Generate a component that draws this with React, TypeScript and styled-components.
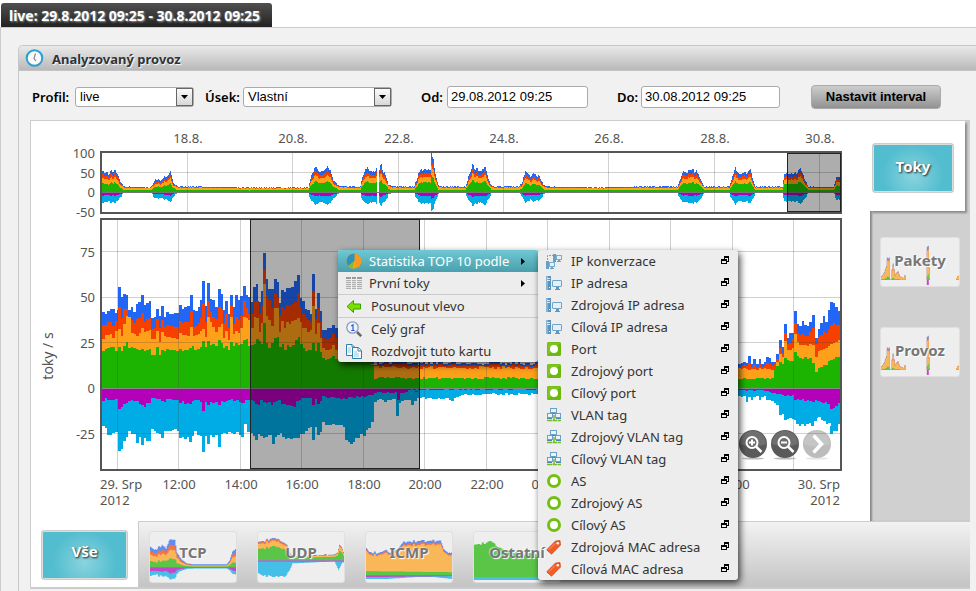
import React from "react";
import styled, { createGlobalStyle, css } from "styled-components";

const GlobalStyle = createGlobalStyle`
  * { box-sizing: border-box; }
  body { margin: 0; background: #fff; color: #222; font-family: "Noto Sans", sans-serif; font-size: 13px; overflow: hidden; }
  button, input, select { font: inherit; color: inherit; margin: 0; }
`;

const colors = {
  blue: "#2266f5", red: "#f54000", orange: "#ffa01a", green: "#1cb400",
  purple: "#b400b8", cyan: "#00ace6", frame: "#555",
};

/* ---------- layout ---------- */

const Page = styled.div`
  position: relative;
  display: flex;
  flex-direction: column;
  min-height: 100vh;
  padding-top: 3px;
  overflow: hidden;
`;

const PageTab = styled.h1`
  align-self: flex-start;
  margin: 0 0 0 1px;
  padding: 0 12px 0 8px;
  height: 24px;
  line-height: 26px;
  font-size: 14px;
  font-weight: 700;
  color: #fff;
  white-space: nowrap;
  text-shadow: 1px 1px 2px #999;
  background: linear-gradient(#505050, #222);
  border-radius: 3px 3px 0 0;
`;

const PageBody = styled.main`
  flex: 1;
  display: flex;
  padding: 17px 0 0 17px;
  background: #f1f1f1;
  border: solid #ccc;
  border-width: 1px 0 0 1px;
`;

const Panel = styled.section`
  flex: 1;
  min-width: 0;
  border: solid #c8c8c8;
  border-width: 1px 0 0 1px;
  border-radius: 5px 0 0 0;
`;

const PanelHeader = styled.header`
  display: flex;
  align-items: center;
  gap: 8px;
  height: 25px;
  padding-left: 6px;
  background: linear-gradient(#e9e9e9, #b9b9b9);
  border-bottom: 1px solid #c4c4c4;
  border-radius: 4px 0 0 0;
`;

const PanelTitle = styled.h2`
  margin: 0;
  padding-top: 2px;
  font-size: 13px;
  line-height: 20px;
  font-weight: 700;
  color: #333;
  text-shadow: 1px 1px 1px #fff;
`;

const Controls = styled.form`
  display: flex;
  align-items: center;
  height: 49px;
  padding: 2px 0 0 13px;
`;

const Label = styled.label<{ $width: number }>`
  width: ${(p) => p.$width}px;
  font-size: 13px;
  font-weight: 600;
  color: #000;
  white-space: nowrap;
`;

const SelectBox = styled.span<{ $width: number; $after: number }>`
  display: grid;
  width: ${(p) => p.$width}px;
  height: 20px;
  margin-right: ${(p) => p.$after}px;
  background: #fff;
  border: 1px solid #aaa;
  border-radius: 3px;
  > * { grid-area: 1 / 1; }
`;

const Select = styled.select`
  appearance: none;
  width: 100%;
  height: 18px;
  padding: 0 20px 0 4px;
  border: 0;
  background: transparent;
  color: #000;
  font: 13px "Liberation Sans", Arial, sans-serif;
`;

const Arrow = styled.span`
  justify-self: end;
  display: grid;
  place-items: center;
  width: 17px;
  height: 18px;
  background: linear-gradient(#fafafa, #d8d8d8);
  border: 1px solid #666;
  pointer-events: none;
`;

const DateInput = styled.input<{ $width: number; $after: number }>`
  width: ${(p) => p.$width}px;
  height: 22px;
  margin-right: ${(p) => p.$after}px;
  padding: 0 3px;
  background: #fff;
  border: 1px solid #aaa;
  border-radius: 3px;
  color: #000;
  font: 13px "Liberation Sans", Arial, sans-serif;
`;

const SubmitButton = styled.button`
  width: 130px;
  height: 24px;
  padding: 0;
  border: 1px solid #aaa;
  border-radius: 4px;
  background: linear-gradient(#cdcdcd, #929292);
  color: #000;
  font: bold 13px "Liberation Sans", Arial, sans-serif;
`;

const Board = styled.div`
  margin: 0 6px 0 11px;
  border: solid #ccc;
  border-width: 1px 0 2px 1px;
  background: #fff;
`;

const BoardMain = styled.div`
  display: flex;
`;

const ChartArea = styled.div`
  position: relative;
  flex: 1;
  min-width: 0;
`;

const ChartSvg = styled.svg`
  display: block;
  width: 100%;
  height: auto;
  font-family: "Noto Sans", sans-serif;
  font-size: 13px;
  fill: #545454;
`;

const ZoomButtons = styled.div`
  position: absolute;
  right: 38px;
  bottom: 60px;
  display: flex;
  gap: 2px;
`;

const RoundButton = styled.button`
  width: 30px;
  height: 32px;
  padding: 0;
  border: 0;
  background: none;
  &:disabled { opacity: 0.4; }
  svg { display: block; }
`;

const Side = styled.nav`
  display: flex;
  flex-direction: column;
  width: 100px;
  background: #d0d0d0;
`;

const SideActive = styled.div`
  position: relative;
  width: 95px;
  height: 90px;
  padding: 22px 0 0 2px;
  background: #fff;
  box-shadow: 2px 2px 2px #8a8a8a;
  clip-path: inset(0 -5px -5px 0);
`;

const SideRest = styled.div`
  flex: 1;
  display: flex;
  flex-direction: column;
  gap: 40px;
  padding: 26px 0 0 10px;
  box-shadow: inset 3px 0 2px -1px #888;
`;

const BottomTabs = styled.nav`
  display: flex;
  height: 66px;
`;

const BottomActive = styled.div`
  width: 107px;
  padding: 9px 0 0 10px;
`;

const BottomRest = styled.div`
  flex: 1;
  display: flex;
  gap: 20px;
  padding: 9px 0 0 10px;
  border: solid #ccc;
  border-width: 1px 0 0 1px;
  background: linear-gradient(#f2f2f2, #c4c4c4);
`;

const tabText = css`
  font-size: 15px;
  line-height: 20px;
  font-weight: 700;
`;

const ActiveTab = styled.button<{ $width: number; $lift: number }>`
  ${tabText}
  width: ${(p) => p.$width}px;
  height: 50px;
  padding: 0 0 ${(p) => p.$lift}px;
  border: 1px solid #ccc;
  border-radius: 3px;
  outline: 1px solid #ddd;
  outline-offset: -2px;
  background: radial-gradient(circle at 50% 65%, #8ad4de, #52bdcf 60%);
  color: #fff;
  text-shadow: 1px 1px 2px #222;
`;

const Thumb = styled.button<{ $width: number; $height: number }>`
  ${tabText}
  display: grid;
  flex: none;
  width: ${(p) => p.$width}px;
  height: ${(p) => p.$height}px;
  padding: 0;
  border: 1px solid #e0e0e0;
  border-radius: 3px;
  background: #eee;
  color: #777;
  overflow: hidden;
  text-shadow: 1px 1px 1px #fff, -1px -1px 1px rgba(255, 255, 255, 0.5);
  > * { grid-area: 1 / 1; }
  svg { display: block; width: 100%; height: 100%; opacity: 0.7; }
`;

const ThumbLabel = styled.span<{ $lift: number }>`
  align-self: center;
  justify-self: center;
  padding-bottom: ${(p) => p.$lift}px;
  z-index: 1;
`;

/* ---------- menus ---------- */

const Menu = styled.ul<{ $x: number; $y: number }>`
  position: absolute;
  left: ${(p) => p.$x}px;
  top: ${(p) => p.$y}px;
  width: 200px;
  margin: 0;
  padding: 0;
  list-style: none;
  background: #ededed;
  border-radius: 3px;
  box-shadow: 2px 3px 7px rgba(0, 0, 0, 0.75);
  overflow: hidden;
`;

const MenuRow = styled.li<{ $line?: boolean }>`
  border-top: ${(p) => (p.$line ? "1px solid #ccc" : "0")};
`;

const MenuButton = styled.button<{ $active?: boolean; $sub?: boolean }>`
  display: grid;
  grid-template-columns: 16px 1fr 10px;
  column-gap: ${(p) => (p.$sub ? 7 : 9)}px;
  align-items: center;
  width: 100%;
  height: 22px;
  padding: 0 8px;
  border: 0;
  background: ${(p) => (p.$active ? "linear-gradient(#6fc8d4, #4a9fac)" : "transparent")};
  color: ${(p) => (p.$active ? "#fff" : "#333")};
  font-size: 13px;
  line-height: 20px;
  text-align: left;
  white-space: nowrap;
  svg { display: block; }
`;

/* ---------- chart data ---------- */

type Pt = [number, number];

/* "x v v v | x v v": each run starts at x and steps by one five-minute bar. */
const BAR = 2.5625;
const runs = (text: string): Pt[] =>
  text.split("|").flatMap((run) => {
    const [x, ...v] = run.trim().split(/\s+/).map(Number);
    return v.map((h, i): Pt => [x + i * BAR, h]);
  });

const stepArea = (pts: Pt[], zero: number, dir: number, end: number) => {
  let d = `M${pts[0][0]} ${zero}`;
  pts.forEach(([x, h], i) => {
    const next = i + 1 < pts.length ? pts[i + 1][0] : end;
    d += `V${(zero - dir * h).toFixed(1)}H${next.toFixed(1)}`;
  });
  return d + `V${zero}Z`;
};

const noise = (i: number) => {
  const s = Math.sin(i * 127.1 + 11.7) * 43758.5453;
  return s - Math.floor(s);
};

const flat = (from: number, to: number, base: number, spread: number, seed: number) => {
  const out: number[] = [];
  for (let x = from, i = 0; x < to; x += BAR, i++) out.push(+(base + spread * noise(i + seed)).toFixed(1));
  return `${from} ${out.join(" ")}`;
};

const main = {
  blue: runs(
    "102 76 74 77 79 79 75 78|118 101 91 94 93|128 78 81 76 84 86|141 93 83 85 87|151 70 71 79 72 82 71|166 76 74 74 75 75|179 83 79 81 82|190 93 78 77 81 88|202 107 82|207 105 89 88 81|218 99 94 78|225 87 74|230 93 81|235 93 88 92|243 102 93 91|251 86|253 101 104 86 97|263 135 109 99 99|274 109 106 85|281 98 96 100 100 101 107|297 113 90 87 79 78 74|312 114 79 95 77|322 58 58 60 60 63 60 60 58 56 52 50 46 44 40 38 38 36 32 30 28|" +
      flat(374, 738, 23, 4, 3) +
      "|738 24 25 26 25 32 24 29 24 29 24 26 31 30 26 26 34|779 48 41|784 64 50 55 55 66|794 77 64 62 67 63 62 66 73|815 50 59 65 72 66 78|830 86 85 81 77"),
  red: runs(
    "102 63 63 66 66 62 67|118 81 70 79 79|128 66 68 65 69 70|141 75 66 69 70|151 59 60 69 60 68 61|166 63 62 62 61 61|179 67 65 66 66|190 77 61 62 65 70|202 84 66|207 87 76 71 69|218 81 79 65|225 74 60|230 82 64 71 68 72|243 87 80 74|251 74 86|256 87 74 83|263 118 93 88 80|274 94 91 73|281 81 79 83 82 84 86|297 95 80 74 71 68 66|312 97 69 80 66|322 50 48 49 50 54 50 49 48 46 44 42 40 38 36 34 32 30 28 26 25|" +
      flat(374, 738, 21, 4, 3) +
      "|738 21 22 23 22 25 21 23 21 24 21 22 25 24 22 24 29|779 40 35|784 55 44 45 49 58|794 65 55 53 54 52 52 56 60|815 44 51 53 57 55 59|830 63 65 63 63"),
  orange: runs(
    "102 49 53 53 54 50 57|118 59 52 64 72 71|131 55 54 52 55|141 60 56 57 58|151 49 49 57 46 56 52|166 51 51 50 50 49|179 55 53 53 52|190 61 52 53 54 57|202 59 51|207 71 66 61 56|218 61 64 50|225 57 48|230 71 54 57 55 60|243 71 70 68|251 60 71|256 70 56 65|263 104 72 68 62|274 80 80 56|281 67 60 66 64 67 68|297 70 66 60 60 56 58|312 82 54 65 50|322 40 38 38 39 43 38 38 36 35 34 33 32 31 30 29 28 27 26 25 24|" +
      flat(374, 738, 19, 3, 7) +
      "|738 20 19 20 19 18 19 19 18 20 19 20 19 19 18 19 26|779 34 31|784 47 38 38 40 52|794 54 46 43 43 43 42 44 43|815 31 37 38 39 40 42|830 44 45 46 48"),
  green: runs(
    "102 37 39 40 41 41 37|118 41 37 42 46|128 40 41 40 39 38|141 39 37 38 39|151 33 33 41 33 38 37|166 39 38 38 38 37|179 39 37 38 38 40 42 38 39 41|202 47 41|207 47 43 44 42|218 48 45 40|225 42 38|230 46 42 45 43 44|243 48 49 42|251 43 44 49 47 44|263 65 45 40 45|274 50 51 41 44 38 43 41 43|295 48 51 44 40 37 38|312 45 37 45 36|322 30 28 29 30 32 29 29 28 28 28 27 27 27 26 26 26 26 26 26 23|" +
      flat(374, 738, 9, 2, 5) +
      "|738 9 9 10 9 9 9 9 10 10 10 9 10 9 10 19 22|779 26 24 30 28 27 27|794 36 32 30 29 31 29 30 25|815 16 20 21 23 23 27|830 28 29 31 31"),
  cyan: runs(
    "102 38 40 47 47 45 44|118 63 61 53 49 43 46 46 55 49 57 50 53 53|151 41 43 45 46 50 43 43 43 42 41 43|179 50 49 51 49 54 48 43 47 48|202 64 48 56 47 49 47|218 59 46 45 46 44 45 46 44 47 49|244 36 44|250 45 48 52 46 48 50 49 47|272 56 49 47 45 49 51 50 51 50 50 50|300 46 46 43 40 39|312 52 39 47 44|322 34 37 37 37 36 37 37 37 39 52 54 56 54 50 50 46 48 42 40 34|" +
      "374 14 12 11 12 14 12 12 11|396 28 15 13 12 12 12 17 13|" + flat(417, 446, 9, 2, 1) + "|446 10 12 13 10 9 8 7|" + flat(464, 738, 5, 2, 9) +
      "|738 8 9 8 14 9 12 9 8 12 9 8 12 12 13 15 17|779 27 26 32 31 30 31 32|796 36 38 36 38 36 35 38 33 30|818 29 32 33 36 35 38|830 46 43 43 36"),
  purple: runs(
    "102 13 10 12 12 12 11|118 21 19 16 15 13 12 13 13 16 17 19 15 15|151 10 10 11 11 13 14 11 11 12 12 12|179 15 13 16 15 16 13 12 12 14|202 23 14 17 14 15 14|218 17 13 14 13 12 11 13 12 14 15|245 12 12 12 13 16 17 12 14 15 14 17 14 13 12 16 16 17 17 18 19 13 12 10 10|312 17 11 16 13 8 9 10 9 9 10 10 11 10 11 9 9 10 8 9 8 9 8 7 7|" +
      flat(374, 420, 3, 2, 4) + "|397 12 5 4 4|" + flat(408, 738, 1, 1, 2) +
      "|738 2 2 2 3 2 2 3 2 2 2 3 3 4 5 5 6|779 6 7 8 7 8 7|794 12 11 12 11 13 12 13 14 12 13 14 15 14 16|830 21 20 18 15"),
};

const hills: Pt[] = [
  [102, 20], [108, 19], [111, 22], [117, 19], [119, 12], [124, 6], [150, 5], [152, 8], [156, 13], [160, 11], [164, 17], [166, 14],
  [170, 20], [173, 9], [178, 6], [200, 6], [240, 5], [308, 5], [312, 20], [316, 25], [320, 20], [324, 22], [327, 27], [330, 21], [333, 11],
  [338, 7], [345, 6], [360, 6], [362, 15], [365, 22], [367, 26], [370, 20], [375, 22], [381, 26], [384, 18], [388, 8], [392, 6],
  [414, 6], [418, 18], [424, 24], [430, 21], [431, 37], [433, 33], [435, 20], [438, 7], [442, 6], [465, 6], [468, 15], [472, 26],
  [476, 22], [485, 24], [487, 16], [491, 7], [494, 6], [518, 6], [522, 10], [525, 22], [528, 18], [530, 16], [533, 19], [539, 16],
  [542, 9], [545, 6], [600, 5], [640, 6], [677, 6], [681, 17], [684, 22], [690, 20], [696, 22], [700, 13], [704, 6], [729, 6],
  [732, 15], [735, 23], [738, 20], [745, 18], [750, 22], [752, 14], [755, 6], [782, 6], [784, 18], [790, 17], [800, 22], [805, 12],
  [808, 6], [833, 5], [836, 14], [840, 15],
];

const at = (pts: Pt[], x: number) => {
  const i = pts.findIndex((p) => p[0] > x);
  if (i < 0) return pts[pts.length - 1][1];
  if (i === 0) return pts[0][1];
  const [x0, a] = pts[i - 1];
  const [x1, b] = pts[i];
  return a + ((b - a) * (x - x0)) / (x1 - x0);
};

const overview = (f: (h: number) => number): Pt[] => {
  const out: Pt[] = [];
  for (let x = 102; x < 840; x++) {
    const h = at(hills, x);
    const hh = x > 376 && x < 379 ? 0 : h > 8 ? h * (0.9 + 0.2 * noise(x >> 1)) : h - 0.7 + 0.5 * noise(x);
    out.push([x, f(hh)]);
  }
  return out;
};

const over = {
  blue: overview((h) => h),
  red: overview((h) => (h < 8 ? h * 0.88 : h * 0.83)),
  orange: overview((h) => (h < 8 ? h * 0.8 : h * 0.67)),
  green: overview((h) => (h < 8 ? h * 0.36 : h * 0.43)),
  cyan: overview((h) => (h < 8 ? h * 0.22 : h * 0.5)),
  purple: overview((h) => (h < 8 ? h * 0.1 : h * 0.17)),
};

type Layers = typeof main;
const Stack = ({ data, zero, end }: { data: Layers; zero: number; end: number }) => (
  <g shapeRendering="crispEdges">
    {(["blue", "red", "orange", "green"] as const).map((k) => (
      <path key={k} fill={colors[k]} d={stepArea(data[k], zero, 1, end)} />
    ))}
    {(["cyan", "purple"] as const).map((k) => (
      <path key={k} fill={colors[k]} d={stepArea(data[k], zero, -1, end)} />
    ))}
  </g>
);

const dayTicks: [number, string][] = [
  [187, "18.8."], [292, "20.8."], [398, "22.8."], [503, "24.8."], [608, "26.8."], [714, "28.8."], [819, "30.8."],
];
const hourTicks: [number, string][] = [
  [117, ""], [178, "12:00"], [240, "14:00"], [301, "16:00"], [363, "18:00"], [424, "20:00"], [486, "22:00"], [547, "00:00"],
  [609, "02:00"], [670, "04:00"], [732, "06:00"], [793, ""],
];

const TrafficChart = () => (
  <ChartSvg viewBox="31 121 839 400" role="img" aria-label="Analyzovaný provoz">
    {dayTicks.map(([x, t]) => <text key={t} x={x + 1} y={143} textAnchor="middle">{t}</text>)}
    {[["100", 158], ["50", 178], ["0", 197], ["-50", 217]].map(([t, y]) => (
      <text key={t} x={95} y={y} textAnchor="end">{t}</text>
    ))}
    <Stack data={over} zero={192} end={840} />
    <g fill="#444" fillOpacity={0.25}>
      {dayTicks.map(([x]) => <rect key={x} x={x} y={153} width={1} height={59} />)}
      <rect x={102} y={172} width={738} height={1} />
    </g>
    <rect x={102} y={192} width={738} height={1} fill="#777" />
    <rect x={101} y={152} width={740} height={61} fill="none" stroke={colors.frame} strokeWidth={2} />
    <rect x={787.5} y={153.5} width={53} height={58} fill="#000" fillOpacity={0.32} stroke="#222" />

    <Stack data={main} zero={388} end={840} />
    <g fill="#444" fillOpacity={0.25}>
      {hourTicks.map(([x]) => <rect key={x} x={x} y={220} width={1} height={249} />)}
      {[251, 297, 342, 433].map((y) => <rect key={y} x={102} y={y} width={738} height={1} />)}
    </g>
    <rect x={102} y={388} width={738} height={1} fill="#888" />
    <rect x={101} y={219} width={740} height={251} fill="none" stroke={colors.frame} strokeWidth={2} />
    <rect x={250.5} y={219.5} width={169} height={249} fill="#000" fillOpacity={0.32} stroke="#222" />
    {[["75", 257], ["50", 302], ["25", 348], ["0", 393], ["-25", 439]].map(([t, y]) => (
      <text key={t} x={95} y={y} textAnchor="end">{t}</text>
    ))}
    {hourTicks.map(([x, t]) => t && <text key={x} x={x + 1} y={489} textAnchor="middle">{t}</text>)}
    <text x={100} y={489}>29. Srp</text>
    <text x={100} y={505}>2012</text>
    <text x={840} y={489} textAnchor="end">30. Srp</text>
    <text x={840} y={505} textAnchor="end">2012</text>
    <text transform="translate(53 356) rotate(-90)" textAnchor="middle" fontSize={14}>toky / s</text>
  </ChartSvg>
);

/* ---------- thumbnails ---------- */

interface Mini { w: number; h: number; zero: number; up: [string, Pt[]][]; down: [string, Pt[]][] }

const scale = (pts: Pt[], k: number): Pt[] => pts.map(([x, y]) => [x, y * k]);

const tcp: Pt[] = [[0, 21], [4, 18], [8, 20], [12, 23], [16, 18], [19, 27], [22, 28], [25, 28], [27, 14], [32, 8], [37, 4], [45, 3], [78, 3], [81, 7], [84, 16], [88, 21]];
const udp: Pt[] = [[0, 19], [6, 20], [12, 22], [18, 22], [24, 19], [29, 15], [33, 6], [38, 4], [56, 5], [78, 6], [81, 8], [83, 16], [86, 13], [88, 6]];
const icmp: Pt[] = [[0, 26], [3, 22], [16, 21], [19, 24], [24, 21], [32, 25], [38, 32], [76, 33], [79, 25], [84, 21], [88, 23]];
const rest: Pt[] = [[0, 33], [18, 36], [22, 32], [28, 28], [50, 24], [88, 22]];
const pak: Pt[] = [
  [0, 4], [3, 8], [5, 14], [6, 24], [8, 22], [9, 1], [10, 1], [11, 12], [12, 17], [14, 5], [17, 8], [19, 4], [23, 2], [24, 5], [25, 0],
  [46, 0], [47, 35], [48, 34], [49, 12], [50, 0], [76, 0], [78, 4], [80, 5],
];

const minis: Record<string, Mini> = {
  TCP: { w: 88, h: 51, zero: 36, up: [["blue", tcp], ["red", scale(tcp, 0.8)], ["orange", scale(tcp, 0.62)], ["green", scale(tcp, 0.3)]], down: [["cyan", scale(tcp, 0.42)], ["purple", scale(tcp, 0.2)]] },
  UDP: { w: 88, h: 51, zero: 29, up: [["blue", udp], ["red", scale(udp, 0.96)], ["orange", scale(udp, 0.88)], ["green", scale(udp, 0.62)]], down: [["cyan", [[0, 13], [5, 16], [27, 16], [32, 10], [35, 3], [78, 1], [82, 10], [86, 2]]], ["purple", [[0, 1]]]] },
  ICMP: { w: 88, h: 51, zero: 44, up: [["blue", scale(icmp, 1.07)], ["red", icmp], ["orange", scale(icmp, 0.95)], ["green", [[0, 4], [88, 3]]]], down: [["cyan", [[0, 4], [20, 4], [50, 2], [70, 2], [88, 4]]], ["purple", [[0, 2], [88, 1]]]] },
  "Ostatní": { w: 88, h: 51, zero: 46, up: [["green", rest]], down: [["cyan", [[0, 3], [88, 3]]]] },
  Pakety: { w: 80, h: 49, zero: 43, up: [["blue", pak], ["red", scale(pak, 0.93)], ["orange", scale(pak, 0.88)], ["green", scale(pak, 0.15)]], down: [["purple", [[0, 0], [46, 0], [47, 5], [48, 5], [49, 0]]]] },
};

const MiniChart = ({ m }: { m: Mini }) => {
  const line = (pts: Pt[]): Pt[] =>
    Array.from({ length: m.w }, (_, x): Pt => {
      const h = at(pts, x);
      return [x, h > 5 ? h + Math.round(noise(x >> 1) * 2) - 1 : h];
    });
  return (
    <svg viewBox={`0 0 ${m.w} ${m.h}`} preserveAspectRatio="none" aria-hidden="true">
      {m.up.map(([k, p]) => <path key={k} fill={colors[k as keyof typeof colors]} d={stepArea(line(p), m.zero, 1, m.w)} />)}
      {m.down.map(([k, p]) => <path key={k} fill={colors[k as keyof typeof colors]} d={stepArea(line(p), m.zero, -1, m.w)} />)}
    </svg>
  );
};

/* ---------- icons ---------- */

const Icon = ({ children, size = 16 }: { children: React.ReactNode; size?: number }) => (
  <svg width={size} height={size} viewBox={`0 0 ${size} ${size}`} aria-hidden="true">{children}</svg>
);

const PieIcon = () => (
  <Icon>
    <circle cx="8" cy="8" r="7.5" fill="#f59a1c" />
    <path d="M.5 8A7.500 7.500 0 0 0 8 15.500L9 8Z" fill="#f2c022" />
    <path d="M8.500 8V.5A7.500 7.500 0 0 0 2.500 13Z" fill="#2f93b8" />
    <path d="M8.500 8 2.500 13A7.500 7.500 0 0 0 7 15.400Z" fill="#8fb52c" />
  </Icon>
);
const TableIcon = () => (
  <Icon>
    <path d="M0 2h16v2H0z" fill="#999" />
    <path d="M0 5h16v9H0z" fill="#e2e2e2" />
    <path d="M0 5.500h16M0 7.500h16M0 9.500h16M0 11.500h16M0 13.500h16" stroke="#b0b0b0" />
    <path d="M5.500 2v12M10.500 2v12" stroke="#f3f3f3" />
  </Icon>
);
const LeftIcon = () => (
  <Icon><path d="M1 8.500 7.500 2.500V6H14.500V11H7.500V14.500Z" fill="#7be000" stroke="#35a000" strokeLinejoin="round" /></Icon>
);
const MagnifierIcon = () => (
  <Icon>
    <path d="m11 11 4.200 4.200" stroke="#666" strokeWidth="2.500" />
    <circle cx="6.500" cy="6.500" r="5.700" fill="#eef4ff" stroke="#8a9bc8" strokeWidth="1.300" />
    <path d="M5.200 5 7 3.800V9.500M5.200 9.500H8.600" stroke="#2d57c8" strokeWidth="1.200" fill="none" />
  </Icon>
);
const CopyIcon = () => (
  <Icon>
    <g fill="#f7fbff" stroke="#2b83ad">
      <path d="M.5 1.500H6L8.500 4V12.500H.5Z" /><path d="M6 1.500V4H8.500" />
      <path d="M6.500 4.500H12.500L15.500 7.500V15.500H6.500Z" /><path d="M12 4.500V8H15.500" />
    </g>
    <path d="M2 5h3M2 7h3M2 9h3M8 9h3M8 11h5M8 13h5" stroke="#9cc9e0" />
  </Icon>
);
const HostIcon = () => (
  <Icon>
    <path d="M0 1h5v14H0z" fill="#5a93bd" /><path d="M0 1h2v14H0z" fill="#87b4d3" />
    <path d="M1 3.500h3M1 5.500h3" stroke="#dcebf5" /><path d="M3 12h1v1H3z" fill="#fff" />
    <rect x="6.500" y="5.500" width="9" height="6" rx=".5" fill="#e4f0f8" stroke="#6fa3c8" />
    <path d="M10 12h3v2h1v1H9v-1h1z" fill="#5f97bf" />
  </Icon>
);
const ConversationIcon = () => (
  <Icon>
    <path d="M1.500 7V2.500H8" fill="none" stroke="#6fa3c8" strokeDasharray="2 1" />
    <path d="M7 1h3v8H7zM0 8h3v8H0z" fill="#6a9fc5" />
    <rect x="10.500" y="2.500" width="5" height="4" fill="#e4f0f8" stroke="#7badcf" />
    <rect x="3.500" y="9.500" width="5" height="4" fill="#e4f0f8" stroke="#7badcf" />
    <path d="M12 7h2v1h1v1h-4V8h1zM5 14h2v1h1v1H4v-1h1z" fill="#6a9fc5" />
  </Icon>
);
const PortIcon = () => (
  <Icon>
    <rect x="1" y="1" width="14" height="14" rx="1.500" fill="#6db80c" />
    <path d="M1.500 1.500h13L1.500 14.500z" fill="#8ccc30" opacity=".6" />
    <circle cx="8" cy="8" r="4" fill="#fff" />
  </Icon>
);
const VlanIcon = () => (
  <Icon>
    <g fill="#eaf4fb" stroke="#6aa0c6">
      <rect x="4.500" y="1.500" width="6" height="4" /><rect x="1.500" y="6.500" width="5" height="4" /><rect x="9.500" y="6.500" width="5" height="4" />
    </g>
    <path d="M6 6.500h3M1 11.500h5M10 11.500h5" stroke="#4f86ae" />
    <path d="M8 8v6M1 13.500h14" stroke="#74bd2a" strokeWidth="1.500" strokeDasharray="5 .5" />
  </Icon>
);
const RingIcon = () => <Icon><circle cx="8" cy="8" r="5.500" fill="#fff" stroke="#74c010" strokeWidth="3" /></Icon>;
const TagIcon = () => (
  <Icon>
    <path d="M1 10.500 9.500 2 14 1.500 14.500 6 6 14.800Q5.500 15.300 5 14.800L1 11.200Z" fill="#f25c26" stroke="#c9431a" strokeWidth=".7" />
    <circle cx="11.800" cy="4.200" r="1.300" fill="#fff" />
    <path d="m3 10.500 6-6" stroke="#ff9a70" />
  </Icon>
);
const PopupIcon = () => (
  <Icon size={10}>
    <g shapeRendering="crispEdges">
      <path d="M4 0h5v6H4z" fill="#000" /><path d="M5 2h3v3H5z" fill="#ededed" />
      <path d="M1 3h6v5H1z" fill="#000" /><path d="M2 5h4v2H2z" fill="#ededed" />
    </g>
  </Icon>
);
const SubmenuIcon = () => <Icon size={9}><path d="M1 1v7l4-3.500z" fill="#000" /></Icon>;
const ClockIcon = () => (
  <svg width="19" height="19" viewBox="0 0 19 19" aria-hidden="true">
    <circle cx="9.500" cy="9" r="7.800" fill="#fafafa" stroke="#2a9fd0" strokeWidth="2" />
    <path d="M10.500 4.500 9 9.500 11 12" fill="none" stroke="#888" strokeWidth="1.200" />
  </svg>
);

const RoundIcon = ({ kind }: { kind: "plus" | "minus" | "next" }) => (
  <svg width="30" height="32" viewBox="0 0 30 32" aria-hidden="true">
    <ellipse cx="15" cy="29.500" rx="11" ry="1" fill="#bbb" />
    <circle cx="15" cy="15" r="14" fill="#5a5a5a" />
    <path d="M2 15a13 13 0 0 1 26 0Q15 20 2 15Z" fill="#777" opacity=".75" />
    {kind === "next" ? (
      <path d="m11.500 6.500 8 8.500-8 8.500" fill="none" stroke="#fff" strokeWidth="3.500" />
    ) : (
      <g fill="none" stroke="#fff" strokeWidth="2">
        <circle cx="14" cy="13.500" r="5.500" /><path d="m18 17.500 5.500 5.500" strokeWidth="2.500" />
        <path d={kind === "plus" ? "M11 13.500h6M14 10.500v6" : "M11 13.500h6"} />
      </g>
    )}
  </svg>
);

const DropArrow = () => (
  <Arrow><svg width="7" height="4" viewBox="0 0 7 4" aria-hidden="true"><path d="M0 0h7L3.500 4z" fill="#000" /></svg></Arrow>
);

/* ---------- page ---------- */

const contextItems = [
  { label: "Statistika TOP 10 podle", icon: <PieIcon />, sub: true, active: true },
  { label: "První toky", icon: <TableIcon />, sub: true },
  { label: "Posunout vlevo", icon: <LeftIcon />, line: true },
  { label: "Celý graf", icon: <MagnifierIcon />, line: true },
  { label: "Rozdvojit tuto kartu", icon: <CopyIcon /> },
];

const statItems: [string, React.ReactNode][] = [
  ["IP konverzace", <ConversationIcon />], ["IP adresa", <HostIcon />], ["Zdrojová IP adresa", <HostIcon />], ["Cílová IP adresa", <HostIcon />],
  ["Port", <PortIcon />], ["Zdrojový port", <PortIcon />], ["Cílový port", <PortIcon />],
  ["VLAN tag", <VlanIcon />], ["Zdrojový VLAN tag", <VlanIcon />], ["Cílový VLAN tag", <VlanIcon />],
  ["AS", <RingIcon />], ["Zdrojový AS", <RingIcon />], ["Cílový AS", <RingIcon />],
  ["Zdrojová MAC adresa", <TagIcon />], ["Cílová MAC adresa", <TagIcon />],
];

export default function App() {
  return (
    <Page>
      <GlobalStyle />
      <PageTab>live: 29.8.2012 09:25 - 30.8.2012 09:25</PageTab>
      <PageBody>
        <Panel>
          <PanelHeader>
            <ClockIcon />
            <PanelTitle>Analyzovaný provoz</PanelTitle>
          </PanelHeader>
          <Controls onSubmit={(e) => e.preventDefault()}>
            <Label $width={43} htmlFor="profile">Profil:</Label>
            <SelectBox $width={119} $after={11}>
              <Select id="profile"><option>live</option></Select>
              <DropArrow />
            </SelectBox>
            <Label $width={38} htmlFor="section">Úsek:</Label>
            <SelectBox $width={149} $after={29}>
              <Select id="section"><option>Vlastní</option></Select>
              <DropArrow />
            </SelectBox>
            <Label $width={26} htmlFor="from">Od:</Label>
            <DateInput $width={141} $after={29} id="from" defaultValue="29.08.2012 09:25" />
            <Label $width={24} htmlFor="to">Do:</Label>
            <DateInput $width={139} $after={31} id="to" defaultValue="30.08.2012 09:25" />
            <SubmitButton type="submit">Nastavit interval</SubmitButton>
          </Controls>
          <Board>
            <BoardMain>
              <ChartArea>
                <TrafficChart />
                <ZoomButtons>
                  <RoundButton aria-label="Přiblížit"><RoundIcon kind="plus" /></RoundButton>
                  <RoundButton aria-label="Oddálit"><RoundIcon kind="minus" /></RoundButton>
                  <RoundButton aria-label="Další" disabled><RoundIcon kind="next" /></RoundButton>
                </ZoomButtons>
              </ChartArea>
              <Side>
                <SideActive><ActiveTab $width={82} $lift={4}>Toky</ActiveTab></SideActive>
                <SideRest>
                  {["Pakety", "Provoz"].map((t) => (
                    <Thumb key={t} $width={80} $height={50}>
                      <MiniChart m={minis.Pakety} />
                      <ThumbLabel $lift={4}>{t}</ThumbLabel>
                    </Thumb>
                  ))}
                </SideRest>
              </Side>
            </BoardMain>
            <BottomTabs>
              <BottomActive><ActiveTab $width={87} $lift={8}>Vše</ActiveTab></BottomActive>
              <BottomRest>
                {["TCP", "UDP", "ICMP", "Ostatní"].map((t) => (
                  <Thumb key={t} $width={88} $height={52}>
                    <MiniChart m={minis[t]} />
                    <ThumbLabel $lift={10}>{t}</ThumbLabel>
                  </Thumb>
                ))}
              </BottomRest>
            </BottomTabs>
          </Board>
        </Panel>
      </PageBody>

      <Menu $x={338} $y={250}>
        {contextItems.map((it) => (
          <MenuRow key={it.label} $line={it.line}>
            <MenuButton $active={it.active} $sub={it.sub}>
              {it.icon}
              <span>{it.label}</span>
              {it.sub && <SubmenuIcon />}
            </MenuButton>
          </MenuRow>
        ))}
      </Menu>
      <Menu $x={538} $y={250}>
        {statItems.map(([label, icon]) => (
          <MenuRow key={label}>
            <MenuButton>
              {icon}
              <span>{label}</span>
              <PopupIcon />
            </MenuButton>
          </MenuRow>
        ))}
      </Menu>
    </Page>
  );
}
